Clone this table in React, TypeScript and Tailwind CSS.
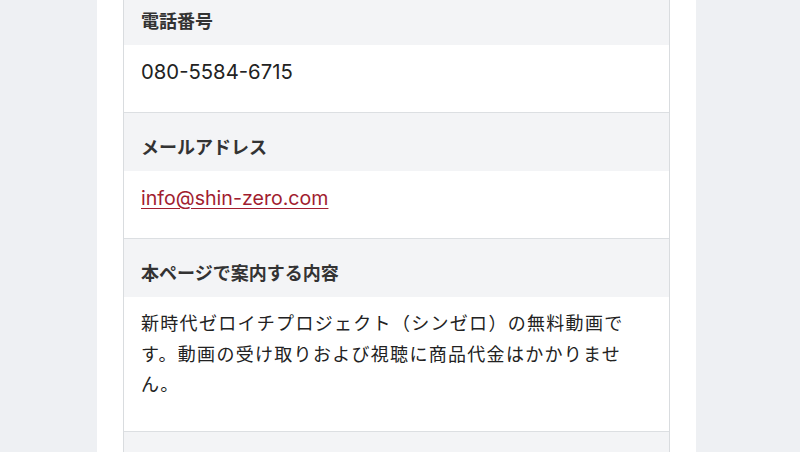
const JP = '"Liberation Sans", "Noto Sans CJK JP", sans-serif'
const LATIN = 'Inter, "Noto Sans CJK JP", sans-serif'

function RowHeader({ children }: { children: React.ReactNode }) {
  return (
    <div className="bg-[#f3f4f6] pl-[17px] pr-[17px] pt-[22px] pb-[10px] text-[18px] leading-[26px] font-bold text-[#333]">
      {children}
    </div>
  )
}

export default function App() {
  return (
    <div className="min-h-screen bg-[#eef0f3] overflow-hidden" style={{ fontFamily: JP }}>
      <div className="ml-[97px] w-[599px] min-h-screen bg-white px-[26px]">
        {/* 情報テーブル（スクロール途中） */}
        <div className="-mt-[13px] border-x border-[#d9dcdf]">
          <div className="border-b border-[#dcdfe2]">
            <RowHeader>電話番号</RowHeader>
            <div className="px-[17px] pt-[12px] pb-[24px] text-[20.3px] leading-[30.5px] text-[#222]" style={{ fontFamily: LATIN }}>
              080-5584-6715
            </div>
          </div>

          <div className="border-b border-[#dcdfe2]">
            <RowHeader>メールアドレス</RowHeader>
            <div className="px-[17px] pt-[12px] pb-[25px] text-[19.6px] leading-[30.5px]" style={{ fontFamily: LATIN }}>
              <a href="#" className="text-[#a11d2f] underline underline-offset-[3px] decoration-1">
                info@shin-zero.com
              </a>
            </div>
          </div>

          <div className="border-b border-[#dcdfe2]">
            <RowHeader>本ページで案内する内容</RowHeader>
            <p className="px-[17px] pt-[12px] pb-[30px] text-[18px] leading-[30.5px] tracking-[1.3px] text-[#222]">
              新時代ゼロイチプロジェクト（シンゼロ）の無料動画です。動画の受け取りおよび視聴に商品代金はかかりません。
            </p>
          </div>

          <div>
            <RowHeader>&nbsp;</RowHeader>
          </div>
        </div>
      </div>
    </div>
  )
}
